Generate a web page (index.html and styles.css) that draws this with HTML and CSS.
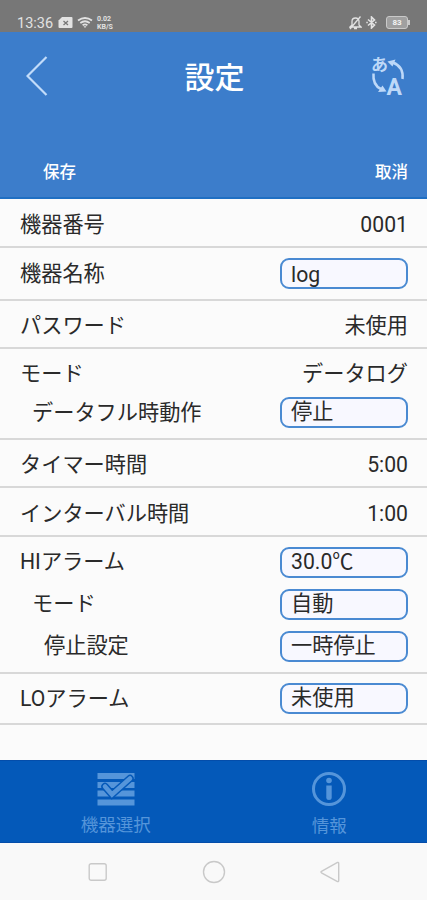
FILE: index.html
```html
<!DOCTYPE html>
<html lang="ja">
<head>
<meta charset="utf-8">
<title>設定</title>
<link rel="stylesheet" href="styles.css">
</head>
<body>
<div class="status">
  <span class="clock">13:36</span>
  <svg class="sim" width="15" height="12" viewBox="0 0 15 12"><path d="M4 0h9.500q1 0 1 1v9q0 1-1 1H1.500q-1 0-1-1V3.500z" fill="#e2e2e2"/><path d="M5.500 4l4.500 4M10 4L5.500 8" stroke="#777" stroke-width="1.300"/></svg>
  <svg class="wifi" width="16" height="12" viewBox="0 0 16 12" fill="none" stroke="#e2e2e2" stroke-width="1.800"><path d="M1 3.500q7-5 14 0M3.300 6q4.700-3.500 9.400 0M5.600 8.300q2.400-1.800 4.800 0"/><path d="M6.500 9.200h3L8 11z" fill="#e2e2e2" stroke="none"/></svg>
  <span class="speed">0.02<br>KB/S</span>
  <span class="spacer"></span>
  <svg class="bell" width="13" height="14" viewBox="0 0 13 14" fill="none" stroke="#e2e2e2" stroke-width="1.300"><path d="M1 11h11L10 9V5.500Q10 2 6.500 2T3 5.500V9zM5 12.500h3M1 13L11.500.5"/></svg>
  <svg class="bt" width="11" height="13" viewBox="0 0 11 13" fill="none" stroke="#e2e2e2" stroke-width="1.600"><path d="M2 3.500l6.500 5.500-3 3V1l3 3L2 9.500M.3 6.500h1.500M9 6.500h1.600"/></svg>
  <span class="battery">83</span>
</div>
<header class="header">
  <div class="titlebar">
    <svg class="back" width="22" height="40" viewBox="0 0 22 40"><path d="M20.500 1L1.500 20l19 19" fill="none" stroke="#c2dcfa" stroke-width="2.200"/></svg>
    <h1 class="title">設定</h1>
    <svg class="lang" width="38" height="56" viewBox="0 -6 38 56">
      <g fill="none" stroke="#bdd8f8" stroke-width="2.500"><path d="M2.500 19.500Q1.500 31 10 35"/><path d="M22 8.500Q33 13 31.500 25"/></g>
      <path d="M15.500 37.500l-8.500.5 4.500-6.500zM16.500 7.500l8-2-3 7z" fill="#bdd8f8"/>
      <text class="lang-ja" x="0" y="17">あ</text><text class="lang-en" x="15.500" y="41">A</text>
    </svg>
  </div>
  <div class="actions"><span>保存</span><span>取消</span></div>
</header>
<main class="list">
  <section class="group g-number"><div class="row"><span>機器番号</span><span>0001</span></div></section>
  <section class="group g-name"><div class="row"><span>機器名称</span><span class="field latin">log</span></div></section>
  <section class="group g-password"><div class="row"><span>パスワード</span><span>未使用</span></div></section>
  <section class="group g-mode">
    <div class="row"><span>モード</span><span>データログ</span></div>
    <div class="row sub"><span>データフル時動作</span><span class="field">停止</span></div>
  </section>
  <section class="group g-timer"><div class="row"><span>タイマー時間</span><span>5:00</span></div></section>
  <section class="group g-interval"><div class="row"><span>インターバル時間</span><span>1:00</span></div></section>
  <section class="group g-hi">
    <div class="row"><span>HIアラーム</span><span class="field">30.0℃</span></div>
    <div class="row sub"><span>モード</span><span class="field">自動</span></div>
    <div class="row subsub"><span>停止設定</span><span class="field">一時停止</span></div>
  </section>
  <section class="group g-lo"><div class="row"><span>LOアラーム</span><span class="field">未使用</span></div></section>
</main>
<nav class="tabs">
  <div class="tab">
    <svg width="38" height="34" viewBox="0 0 38 34"><path d="M.5 1h37v6H.5zM.5 10h37v6H.5zM.5 18.500h37v6H.5zM.5 27.500h37v6H.5z" fill="#5595da"/><path d="M8 14.500l7 8L33 6.500" fill="none" stroke="#0459b9" stroke-width="7.500" stroke-linecap="round"/><path d="M8 14.500l7 8L33 6.500" fill="none" stroke="#5595da" stroke-width="4.500" stroke-linecap="round"/></svg>
    <span>機器選択</span>
  </div>
  <div class="tab">
    <svg width="36" height="36" viewBox="0 0 36 36"><circle cx="18" cy="18" r="15.500" fill="none" stroke="#5595da" stroke-width="3"/><circle cx="18" cy="9.500" r="2.800" fill="#5595da"/><path d="M15.300 14.500h5.400V27q0 2-2.700 2t-2.700-2z" fill="#5595da"/></svg>
    <span>情報</span>
  </div>
</nav>
<div class="sysnav">
  <svg width="20" height="20" viewBox="0 0 20 20"><rect x="1.200" y="1.700" width="17" height="16.600" rx="2"/></svg>
  <svg width="24" height="24" viewBox="0 0 24 24"><circle cx="12" cy="12" r="10.500"/></svg>
  <svg width="20" height="22" viewBox="0 0 20 22"><path d="M17.500 1.500q1.200-.5 1.200 1v17q0 1.500-1.200 1L1.500 11.800q-1-.8 0-1.500z"/></svg>
</div>
</body>
</html>
```
FILE: styles.css
```css
* { box-sizing: border-box; }
body {
  margin: 0;
  width: 427px;
  height: 900px;
  overflow: hidden;
  display: flex;
  flex-direction: column;
  background: #fbfbfb;
  color: #2a2a2a;
  font-family: Roboto, "Noto Sans CJK JP", sans-serif;
}
svg { display: block; flex: none; }

.status {
  height: 32px;
  flex: none;
  display: flex;
  align-items: center;
  padding: 13px 17px 0;
  background: #777;
  color: #e2e2e2;
}
.clock { width: 37px; font-size: 14.5px; line-height: 18px; padding-top: 2px; white-space: nowrap; }
.sim { margin-left: 4px; }
.wifi { margin-left: 4px; }
.speed { margin-left: 4px; font-size: 7px; line-height: 8px; font-weight: 700; }
.spacer { flex: 1; }
.bt { margin: 0 9px 0 4px; }
.battery {
  position: relative;
  width: 22px;
  height: 13px;
  margin-right: 2px;
  border: 1px solid #c9c9c9;
  border-radius: 3px;
  background: #a0a0a0;
  color: #f4f4f4;
  font-size: 8px;
  line-height: 11px;
  font-weight: 700;
  text-align: center;
}
.battery::after {
  content: "";
  position: absolute;
  right: -3px;
  top: 3px;
  width: 2px;
  height: 5px;
  background: #c9c9c9;
}

.header {
  height: 167px;
  flex: none;
  background: #3c7dcb;
  border-bottom: 2px solid #1f6fc3;
  color: #fff;
}
.titlebar {
  height: 88px;
  padding: 0 17px 0 26px;
  display: flex;
  align-items: center;
  justify-content: space-between;
}
.title {
  margin: 3px 0 0 10px;
  font-size: 30px;
  line-height: 40px;
  font-weight: 500;
}
.lang { margin-right: 1px; }
.lang text { fill: #bdd8f8; font-weight: 700; }
.lang-ja { font-size: 17px; }
.lang-en { font-size: 23px; }
.actions {
  margin-top: 40px;
  padding: 0 19px 0 43px;
  display: flex;
  justify-content: space-between;
  font-size: 16.500px;
  line-height: 26px;
  font-weight: 500;
}

.list { height: 561px; flex: none; }
.group {
  padding: 4px 19px 0 20px;
  border-bottom: 2px solid #d8d8d8;
}
.row {
  height: 100%;
  display: flex;
  align-items: center;
  justify-content: space-between;
  font-size: 21.200px;
  line-height: 30px;
  white-space: nowrap;
}
.g-number { height: 49px; }
.g-name { height: 53px; padding-top: 0; }
.g-password { height: 48px; }
.g-mode { height: 91px; padding-top: 1px; }
.g-mode .row { height: 48px; }
.g-mode .sub { height: 29px; }
.g-timer { height: 48px; }
.g-interval { height: 49px; }
.g-hi { height: 137px; padding-top: 4px; }
.g-hi .row { height: 42px; }
.g-lo { height: 51px; padding-top: 0; }
.sub { padding-left: 12px; }
.subsub { padding-left: 24px; }
.field {
  width: 128px;
  height: 31px;
  padding-left: 9px;
  border: 2px solid #4a8ad2;
  border-radius: 9px;
  background: #f8f8ff;
  line-height: 25px;
}
.latin { line-height: 29px; }

.tabs {
  height: 83px;
  flex: none;
  display: flex;
  background: #0459b9;
  border-top: 1px solid #044daa;
  border-bottom: 1px solid #044daa;
  color: #5595da;
}
.tab {
  flex: 1;
  display: flex;
  flex-direction: column;
  align-items: center;
  font-size: 17.500px;
  line-height: 24px;
}
.tab:first-child { padding: 11px 0 0 18px; gap: 7px; }
.tab:last-child { padding: 10px 0 0 18px; gap: 7px; }

.sysnav {
  height: 57px;
  flex: none;
  display: flex;
  align-items: center;
  justify-content: space-between;
  padding: 1px 87px 0 88px;
  background: #f9f9f9;
}
.sysnav svg { fill: none; stroke: #c9c9c9; stroke-width: 1.400; }
```
